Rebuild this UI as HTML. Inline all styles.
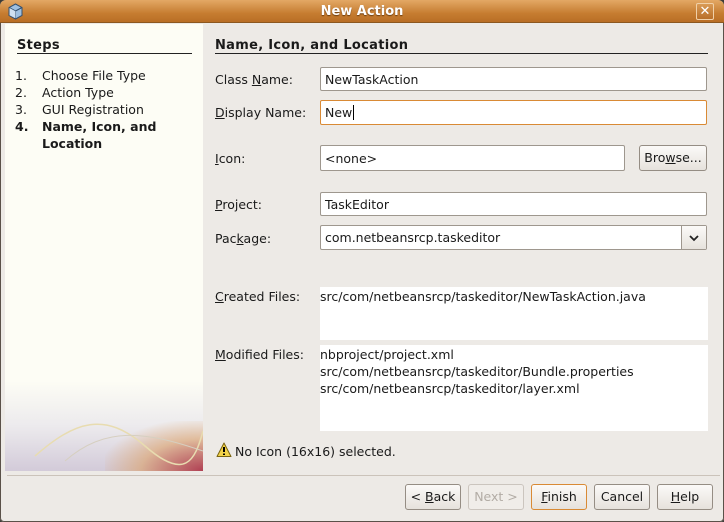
<!DOCTYPE html>
<html><head><style>
*{margin:0;padding:0;box-sizing:border-box}
body{width:724px;height:522px;overflow:hidden;background:#3c3b37;font-family:"DejaVu Sans","Liberation Sans",sans-serif;font-size:12.5px;color:#1a1a1a}
#win{position:absolute;left:0;top:0;width:724px;height:522px;background:#edeae6;border-radius:6px 6px 4px 4px;overflow:hidden;box-shadow:inset 0 0 0 1px #5a5149}
#title{position:absolute;left:0;top:0;width:724px;height:23px;background:linear-gradient(#e3a865,#c67d31 60%,#b96e25);border-bottom:1px solid #8c5820}
#title span{position:absolute;left:0;width:724px;top:4px;text-align:center;color:#fff;font-weight:bold;font-size:13px;text-shadow:0 1px 1px #6a3d10}
.a{position:absolute;white-space:nowrap}
.t{padding-top:1px}
#left{position:absolute;left:5px;top:24px;width:198px;height:447px;background:#fdfdf5;overflow:hidden}
.inp{position:absolute;background:#fff;border:1px solid #9e978e;border-radius:2px;padding-left:4px;padding-top:1px;line-height:22px}
.btn{position:absolute;border:1px solid #958d84;border-radius:3px;background:linear-gradient(#fbfaf8,#e6e2dc);text-align:center;line-height:24px;height:26px}
u{text-decoration:underline}
.h{font-weight:bold;font-size:13px;letter-spacing:0.3px}
</style></head><body>
<div id="win">
<div id="title"><span>New Action</span>
<svg style="position:absolute;left:7px;top:3px" width="17" height="17" viewBox="0 0 17 17"><path d="M8.5 1L15 4.5V12.5L8.5 16L2 12.5V4.5Z" fill="#9fc0e0" stroke="#34506e"/><path d="M2 4.5L8.5 8L15 4.5M8.5 8V16" stroke="#34506e" fill="none"/><path d="M2.5 5L8.5 8.3V15.3L2.5 12.2Z" fill="#cfe0f0"/></svg>
<div style="position:absolute;left:696px;top:3px;width:18px;height:17px;border:1px solid #f0d0a8;border-radius:2px;background:linear-gradient(#d99a55,#b86f28);color:#fff;font-weight:bold;font-size:13px;text-align:center;line-height:15px">✕</div>
</div>
<div id="left">
<div style="position:absolute;left:0;bottom:0;width:198px;height:90px;background:linear-gradient(180deg,rgba(253,253,245,0),rgba(225,222,232,.6) 50%,rgba(200,190,210,.8))"></div>
<div style="position:absolute;left:100px;bottom:0;width:98px;height:50px;background:radial-gradient(ellipse at 100% 100%,rgba(170,40,60,.85),rgba(220,150,80,.5) 45%,rgba(250,240,200,0) 75%)"></div>
<svg style="position:absolute;left:0;bottom:0" width="198" height="80"><path d="M30 65C70 30 100 20 140 55S190 70 198 40" stroke="#e8dcb0" stroke-width="1.5" fill="none"/><path d="M60 70C100 35 140 40 198 60" stroke="#d6cfc0" fill="none"/></svg>
<div class="a h t" style="left:12px;top:13px">Steps</div>
<div class="a" style="left:12px;top:29px;width:175px;border-top:1px solid #222"></div>
<div class="a t" style="left:10px;top:42px;line-height:17px">1.<br>2.<br>3.<br><b>4.</b></div>
<div class="a t" style="left:37px;top:42px;line-height:17px">Choose File Type<br>Action Type<br>GUI Registration<br><b>Name, Icon, and<br>Location</b></div>
</div>
<div class="a h t" style="left:215px;top:37px">Name, Icon, and Location</div>
<div class="a" style="left:215px;top:53px;width:493px;border-top:1px solid #222"></div>
<div class="a t" style="left:215px;top:71px">Class <u>N</u>ame:</div>
<div class="inp" style="left:320px;top:67px;width:387px;height:24px">NewTaskAction</div>
<div class="a t" style="left:215px;top:104px"><u>D</u>isplay Name:</div>
<div class="inp" style="left:320px;top:100px;width:387px;height:25px;border-color:#d98a35">New<span style="border-left:1px solid #000;margin-left:1px"></span></div>
<div class="a t" style="left:215px;top:150px"><u>I</u>con:</div>
<div class="inp" style="left:320px;top:145px;width:305px;height:26px;line-height:24px">&lt;none&gt;</div>
<div class="btn" style="left:639px;top:145px;width:68px">Bro<u>w</u>se...</div>
<div class="a t" style="left:215px;top:196px"><u>P</u>roject:</div>
<div class="inp" style="left:320px;top:192px;width:387px;height:24px">TaskEditor</div>
<div class="a t" style="left:215px;top:230px">Pac<u>k</u>age:</div>
<div class="inp" style="left:320px;top:225px;width:387px;height:25px">com.netbeansrcp.taskeditor</div>
<div class="a" style="left:681px;top:226px;width:25px;height:23px;border-left:1px solid #9e978e;background:linear-gradient(#fbfaf8,#e6e2dc)"><svg width="25" height="23"><path d="M8 10l4 4 4-4" stroke="#222" stroke-width="1.8" fill="none"/></svg></div>
<div class="a t" style="left:215px;top:288px"><u>C</u>reated Files:</div>
<div class="a t" style="left:320px;top:287px;width:388px;height:53px;background:#fff;line-height:17px">src/com/netbeansrcp/taskeditor/NewTaskAction.java</div>
<div class="a t" style="left:215px;top:346px"><u>M</u>odified Files:</div>
<div class="a t" style="left:320px;top:345px;width:388px;height:86px;background:#fff;line-height:17px">nbproject/project.xml<br>src/com/netbeansrcp/taskeditor/Bundle.properties<br>src/com/netbeansrcp/taskeditor/layer.xml</div>
<svg class="a" style="left:216px;top:442px" width="16" height="16"><path d="M8 1L15 14.5H1Z" fill="#f3d34a" stroke="#7a6410" stroke-linejoin="round"/><path d="M8 5V10M8 11.5V13" stroke="#000" stroke-width="2"/></svg>
<div class="a t" style="left:235px;top:443px">No Icon (16x16) selected.</div>
<div class="a" style="left:7px;top:475px;width:713px;border-top:1px solid #cbc3ba"></div>
<div class="btn" style="left:405px;top:484px;width:56px">&lt; <u>B</u>ack</div>
<div class="btn" style="left:468px;top:484px;width:56px;color:#b2aca5;border-color:#cbc5be;background:#f0ede9">Next &gt;</div>
<div class="btn" style="left:531px;top:484px;width:56px;border-color:#d98a35"><u>F</u>inish</div>
<div class="btn" style="left:594px;top:484px;width:56px">Cancel</div>
<div class="btn" style="left:657px;top:484px;width:56px"><u>H</u>elp</div>
</div>
</body></html>
